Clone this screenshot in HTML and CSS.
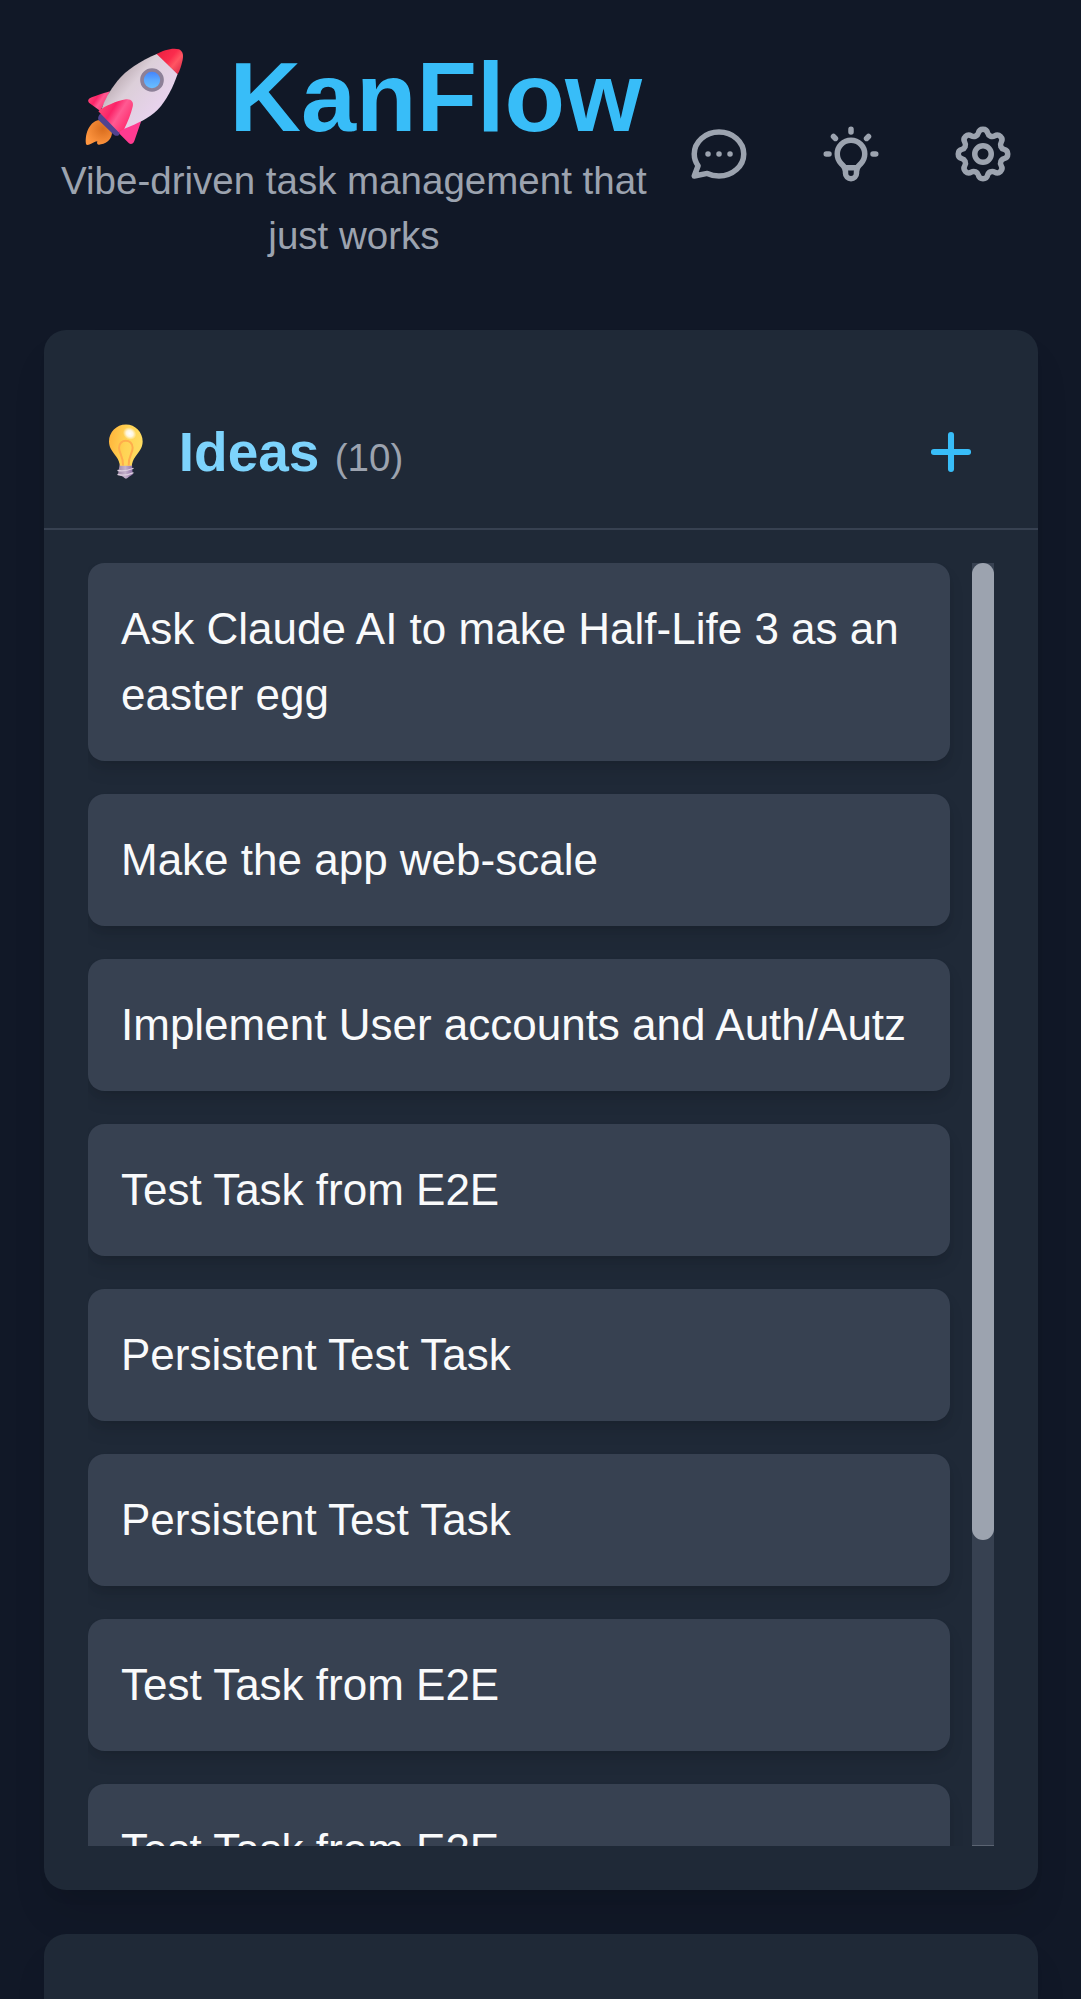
FILE: index.html
```html
<!DOCTYPE html>
<html lang="en">
<head>
<meta charset="utf-8">
<title>KanFlow</title>
<link rel="stylesheet" href="styles.css">
</head>
<body>
<header class="top">
  <div class="brand">
    <h1 class="title">
      <svg class="rocket" viewBox="78 42 408 330" aria-hidden="true">
        <defs>
          <linearGradient id="hull" x1="0.15" y1="0.3" x2="0.75" y2="0.8"><stop offset="0" stop-color="#b9a9b0"/><stop offset=".35" stop-color="#dccfd9"/><stop offset="1" stop-color="#e9d3ef"/></linearGradient>
          <linearGradient id="nose" x1="0" y1="0" x2="1" y2=".8"><stop offset="0" stop-color="#e81e3e"/><stop offset=".5" stop-color="#fb2c4d"/><stop offset=".7" stop-color="#ff5562"/><stop offset="1" stop-color="#e02b4a"/></linearGradient>
          <linearGradient id="fin" x1="0" y1=".2" x2="1" y2=".8"><stop offset="0" stop-color="#ff4d79"/><stop offset=".35" stop-color="#fb2468"/><stop offset=".55" stop-color="#ff5a92"/><stop offset="1" stop-color="#ff1f63"/></linearGradient>
          <linearGradient id="glass" x1="0" y1="0" x2="0" y2="1"><stop offset="0" stop-color="#3f7dfc"/><stop offset=".5" stop-color="#5aa8ff"/><stop offset="1" stop-color="#6cc3ff"/></linearGradient>
          <radialGradient id="flame" cx=".65" cy=".35" r=".7"><stop offset="0" stop-color="#d96d1e"/><stop offset="1" stop-color="#ff9640"/></radialGradient>
        </defs>
        <path fill="url(#flame)" d="M179 270C151 272 134 308 138 342C139 346 144 346 150 343C159 339 166 334 172 334C169 343 174 346 183 343C204 339 216 325 216 306Z"/>
        <path fill="url(#fin)" d="M210 184C186 191 159 200 149 205C144 208 143 214 147 218L181 243Z"/>
        <path fill="#ff3b90" d="M304 272L283 333C280 342 272 344 266 339L234 307L254 292Z"/>
        <path fill="#51438f" d="M178 254C172 264 174 270 181 275L219 312C226 319 232 319 238 314L238 300L188 247Z"/>
        <path fill="url(#hull)" d="M352 71C300 93 259 119 232 153C209 182 193 210 184 239L253 296C293 280 328 264 353 239C381 210 399 171 413 132Z"/>
        <path fill="url(#nose)" d="M350 72C370 60 399 52 417 58C428 63 431 75 428 89C424 107 420 121 413 133Z"/>
        <path fill="url(#fin)" d="M175 244C194 228 230 213 258 208C274 206 282 217 278 230C273 252 263 275 253 296L236 307Z"/>
        <circle cx="336" cy="150" r="30" fill="url(#glass)" stroke="#8d8098" stroke-width="11"/>
      </svg>
      <span class="name">KanFlow</span>
    </h1>
    <p class="tagline">Vibe-driven task management that just works</p>
  </div>
  <nav class="actions">
    <button class="icon-btn" aria-label="Chat"><svg class="icon" viewBox="0 0 24 24"><path d="M8 12h.01M12 12h.01M16 12h.01M21 12c0 4.418-4.03 8-9 8a9.863 9.863 0 01-4.255-.949L3 20l1.395-3.72C3.512 15.042 3 13.574 3 12c0-4.418 4.03-8 9-8s9 3.582 9 8z"/></svg></button>
    <button class="icon-btn" aria-label="Suggestions"><svg class="icon" viewBox="0 0 24 24"><path d="M9.663 17h4.673M12 3v1m6.364 1.636l-.707.707M21 12h-1M4 12H3m3.343-5.657l-.707-.707m2.828 9.9a5 5 0 117.072 0l-.548.547A3.374 3.374 0 0014 18.469V19a2 2 0 11-4 0v-.531c0-.895-.356-1.754-.988-2.386l-.548-.547z"/></svg></button>
    <button class="icon-btn" aria-label="Settings"><svg class="icon" viewBox="0 0 24 24"><path d="M10.325 4.317c.426-1.756 2.924-1.756 3.35 0a1.724 1.724 0 002.573 1.066c1.543-.94 3.31.826 2.37 2.37a1.724 1.724 0 001.065 2.572c1.756.426 1.756 2.924 0 3.35a1.724 1.724 0 00-1.066 2.573c.94 1.543-.826 3.31-2.37 2.37a1.724 1.724 0 00-2.572 1.065c-.426 1.756-2.924 1.756-3.35 0a1.724 1.724 0 00-2.573-1.066c-1.543.94-3.31-.826-2.37-2.37a1.724 1.724 0 00-1.065-2.572c-1.756-.426-1.756-2.924 0-3.35a1.724 1.724 0 001.066-2.573c-.94-1.543.826-3.31 2.37-2.37.996.608 2.296.07 2.572-1.065z"/><path d="M15 12a3 3 0 11-6 0 3 3 0 016 0z"/></svg></button>
  </nav>
</header>
<main class="board">
  <section class="column">
    <div class="column-head">
      <h2 class="column-title">
        <svg class="bulb" viewBox="24 43.5 226.5 165" aria-hidden="true">
          <defs>
            <linearGradient id="bulbGlass" x1="0" y1=".3" x2="1" y2=".5"><stop offset="0" stop-color="#ffb53c"/><stop offset=".5" stop-color="#ffd354"/><stop offset="1" stop-color="#ffdd62"/></linearGradient>
            <radialGradient id="shine"><stop offset="0" stop-color="#fff"/><stop offset=".5" stop-color="#fff" stop-opacity=".8"/><stop offset="1" stop-color="#fff" stop-opacity="0"/></radialGradient>
            <linearGradient id="screw" x1="0" y1="0" x2="1" y2="0"><stop offset="0" stop-color="#9d86a6"/><stop offset=".5" stop-color="#c5b2cc"/><stop offset="1" stop-color="#8e70a6"/></linearGradient>
          </defs>
          <path fill="url(#screw)" d="M119 162H156L158 192L147 199Q138 210 129 199L114 191Z"/>
          <path fill="url(#bulbGlass)" d="M138 42C109 42 87 65 87 93C87 112 99 125 109 139C116 149 118 156 120 166H155C157 156 159 149 166 139C176 125 188 112 188 93C188 65 166 42 138 42Z"/>
          <path fill="none" stroke="#ffac4c" stroke-width="6" d="M129 165C130 137 117 129 117 112C117 84 158 84 158 112C158 129 145 137 146 165"/>
          <ellipse cx="149" cy="69" rx="21" ry="18" fill="url(#shine)" transform="rotate(35 149 69)"/>
          <path fill="none" stroke="#ded0e0" stroke-width="4" stroke-linecap="round" d="M114 180Q134 184 159 174M114 192Q135 197 159 187"/>
        </svg>
        <span>Ideas</span>
        <span class="count">(10)</span>
      </h2>
      <button class="add" aria-label="Add task"><svg class="icon icon-plus" viewBox="0 0 24 24"><path d="M12 5.8v12.4M5.8 12h12.4"/></svg></button>
    </div>
    <div class="scroller">
      <ul class="tasks">
        <li class="task">Ask Claude AI to make Half-Life 3 as an easter egg</li>
        <li class="task">Make the app web-scale</li>
        <li class="task">Implement User accounts and Auth/Autz</li>
        <li class="task">Test Task from E2E</li>
        <li class="task">Persistent Test Task</li>
        <li class="task">Persistent Test Task</li>
        <li class="task">Test Task from E2E</li>
        <li class="task">Test Task from E2E</li>
      </ul>
      <div class="track"><div class="thumb"></div></div>
    </div>
  </section>
  <section class="column column-next"></section>
</main>
</body>
</html>
```
FILE: styles.css
```css
* { box-sizing: border-box; margin: 0; padding: 0; }
html { background: #111827; }
body {
  height: 1999px;
  padding: 44px 42.5px 0 44px;
  overflow: hidden;
  background: #111827;
  color: #f9fafb;
  font: 44px/66px "Liberation Sans", Arial, sans-serif;
}
button { border: 0; background: none; color: inherit; display: block; }
ul { list-style: none; }

.top { display: flex; align-items: center; justify-content: space-between; height: 220px; margin-bottom: 66px; }
.brand { flex: 1; text-align: center; padding-bottom: 2px; }
.title {
  display: flex; align-items: center; justify-content: center; gap: 27.5px;
  height: 110px; font-size: 99px; line-height: 110px; font-weight: 700; color: #38bdf8;
}
.name { padding-bottom: 2px; }
.rocket { width: 136px; height: 110px; flex: none; margin-top: 2px; }
.tagline { font-size: 38.5px; line-height: 55px; color: #9ca3af; }
.actions { display: flex; gap: 22px; margin-right: .7px; color: #9ca3af; }
.icon-btn { padding: 22px; }
.icon {
  display: block; width: 66px; height: 66px; fill: none; stroke: currentColor;
  stroke-width: 2; stroke-linecap: round; stroke-linejoin: round;
}
.icon-plus { stroke-width: 2.2; }

.board { display: flex; flex-direction: column; gap: 44px; height: 1669px; }
.column {
  flex: none; height: 1560px; padding-top: 44px; margin-right: .4px;
  background: #1f2937; border-radius: 22px;
  box-shadow: 0 27.5px 41.25px -8.25px rgba(0,0,0,.1), 0 11px 16.5px -11px rgba(0,0,0,.1);
}
.column-next { flex: 1; height: auto; border-radius: 22px 22px 0 0; }
.column-head {
  display: flex; align-items: center; justify-content: space-between;
  height: 156px; padding: 45px 54px 43px 44px; border-bottom: 2px solid #374151;
}
.column-title {
  display: flex; align-items: baseline; gap: 15.3px;
  padding-top: 5px;
  font-size: 55px; line-height: 66px; font-weight: 700; color: #7dd3fc;
}
.bulb { width: 75.5px; height: 55px; align-self: center; margin-top: -5px; overflow: visible; flex: none; }
.count { font-size: 38.5px; font-weight: 400; color: #9ca3af; }
.add { color: #38bdf8; }

.scroller { display: flex; height: 1283px; margin: 33px 44px 0; overflow: hidden; }
.tasks { flex: 1; display: flex; flex-direction: column; gap: 33px; padding-right: 22px; }
.task {
  flex: none; padding: 33px; background: #374151; border-radius: 16.5px;
  box-shadow: 0 11px 16.5px -2.75px rgba(0,0,0,.1), 0 5.5px 11px -5.5px rgba(0,0,0,.1);
}
.track { width: 22px; background: #374151; border-bottom: 1px solid #5b6472; }
.thumb { height: 977px; border-radius: 11px; background: #9ca3af; }
```
